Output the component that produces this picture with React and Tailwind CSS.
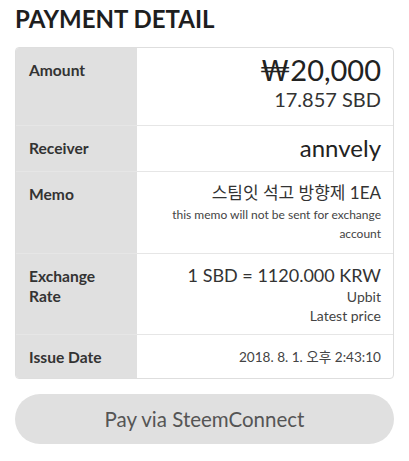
export default function App() {
  const rows = [
    {
      label: 'Amount',
      h: 'h-[78px]',
      value: (
        <div className="pt-[7px] leading-none">
          <div className="text-[29px] text-[#222]">₩20,000</div>
          <div className="text-[20px] text-[#333] mt-[5px]">17.857 SBD</div>
        </div>
      ),
    },
    {
      label: 'Receiver',
      h: 'h-[46px]',
      value: <div className="pt-[10px] text-[24px] leading-none text-[#222]">annvely</div>,
    },
    {
      label: 'Memo',
      h: 'h-[82px]',
      value: (
        <div className="pt-[10px]">
          <div className="text-[17px] leading-[22px] text-[#333]">스팀잇 석고 방향제 1EA</div>
          <div className="text-[12px] leading-[19px] text-[#444] mt-[1px]">
            this memo will not be sent for exchange
            <br />
            account
          </div>
        </div>
      ),
    },
    {
      label: (
        <>
          Exchange
          <br />
          Rate
        </>
      ),
      h: 'h-[81px]',
      value: (
        <div className="pt-[9px]">
          <div className="text-[18px] leading-[24px] text-[#333]">1 SBD = 1120.000 KRW</div>
          <div className="text-[14px] leading-[19px] text-[#444]">Upbit</div>
          <div className="text-[14px] leading-[19px] text-[#444]">Latest price</div>
        </div>
      ),
    },
    {
      label: 'Issue Date',
      h: 'h-[43px]',
      value: <div className="pt-[12px] text-[13.6px] leading-[20px] text-[#444]">2018. 8. 1. 오후 2:43:10</div>,
    },
  ]

  return (
    <div
      className="w-[409px] h-[461px] bg-white px-[15px] pt-[4px]"
      style={{ fontFamily: 'Lato, "Noto Sans CJK KR", sans-serif' }}
    >
      <h1 className="text-[24px] font-bold leading-[30px] text-[#1e1e1e]">PAYMENT DETAIL</h1>

      {/* detail table */}
      <div className="mt-[13px] border border-[#dedede] rounded-[4px] overflow-hidden">
        {rows.map((r, i) => (
          <div
            key={i}
            className={`flex ${r.h} ${i < rows.length - 1 ? 'border-b border-[#e6e6e6]' : ''}`}
          >
            <div className="w-[121px] shrink-0 bg-[#e0e0e0] pl-[13px] pt-[12px] text-[15.6px] font-bold leading-[20px] text-[#333]">
              {r.label}
            </div>
            <div className="flex-1 text-right pr-[12px]">{r.value}</div>
          </div>
        ))}
      </div>

      <button className="mt-[15px] w-full h-[50px] rounded-full bg-[#e0e0e0] text-[20.5px] text-[#555]">
        Pay via SteemConnect
      </button>
    </div>
  )
}
